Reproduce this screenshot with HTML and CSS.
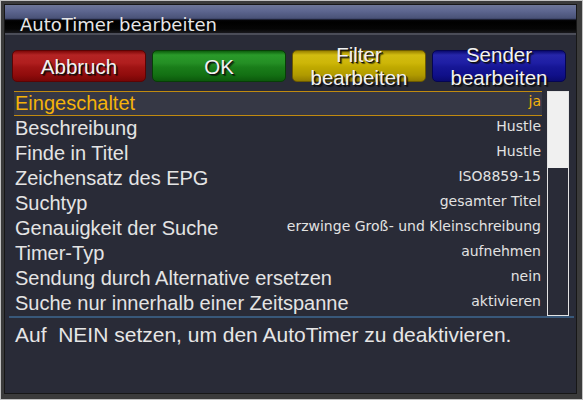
FILE: index.html
```html
<!DOCTYPE html>
<html>
<head>
<meta charset="utf-8">
<link rel="stylesheet" href="styles.css">
</head>
<body>
<div class="frame">
  <div class="window">
    <div class="title">AutoTimer bearbeiten</div>
    <div class="buttons">
      <div class="btn red">Abbruch</div>
      <div class="btn green">OK</div>
      <div class="btn yellow">Filter<br>bearbeiten</div>
      <div class="btn blue">Sender<br>bearbeiten</div>
    </div>
    <div class="listarea">
      <div class="list">
        <div class="row sel"><span class="label">Eingeschaltet</span><span class="value">ja</span></div>
        <div class="row"><span class="label">Beschreibung</span><span class="value">Hustle</span></div>
        <div class="row"><span class="label">Finde in Titel</span><span class="value">Hustle</span></div>
        <div class="row"><span class="label">Zeichensatz des EPG</span><span class="value">ISO8859-15</span></div>
        <div class="row"><span class="label">Suchtyp</span><span class="value">gesamter Titel</span></div>
        <div class="row"><span class="label">Genauigkeit der Suche</span><span class="value">erzwinge Groß- und Kleinschreibung</span></div>
        <div class="row"><span class="label">Timer-Typ</span><span class="value">aufnehmen</span></div>
        <div class="row"><span class="label">Sendung durch Alternative ersetzen</span><span class="value">nein</span></div>
        <div class="row"><span class="label">Suche nur innerhalb einer Zeitspanne</span><span class="value">aktivieren</span></div>
      </div>
      <div class="scrollbar"><div class="thumb"></div></div>
    </div>
    <div class="sep"></div>
    <div class="desc">Auf&nbsp; NEIN setzen, um den AutoTimer zu deaktivieren.</div>
  </div>
</div>
</body>
</html>
```
FILE: styles.css
```css
html, body {
  margin: 0;
  padding: 0;
  background: #bdbdbd;
}
.frame {
  width: 583px;
  height: 400px;
  box-sizing: border-box;
  border: 1px solid #c2c2c2;
  background: #3b3b3b;
  padding: 3px 5px 5px 3px;
}
.window {
  height: 100%;
  box-sizing: border-box;
  border: 1px solid #171717;
  background: #292b37;
  overflow: hidden;
}
.title {
  height: 30px;
  box-sizing: border-box;
  padding: 10px 0 0 15px;
  line-height: 20px;
  font-family: "DejaVu Sans", sans-serif;
  font-size: 18px;
  color: #e6e6e6;
  background: linear-gradient(to bottom, #6e7798 0px, #5d6690 6px, #4a5378 13px, #363d60 14px, #060609 15px, #000 17px, #050505 24px, #18181c 28px);
  border-bottom: 2px solid #4b4d58;
}
.buttons {
  display: flex;
  gap: 6px;
  margin-top: 15px;
  padding-left: 7px;
}
.btn {
  width: 134px;
  height: 32px;
  box-sizing: border-box;
  border-radius: 5px;
  display: flex;
  align-items: center;
  justify-content: center;
  text-align: center;
  font-family: "Liberation Sans", Arial, sans-serif;
  font-size: 20.5px;
  line-height: 23px;
  color: #f2f2f2;
  text-shadow: 1px 1px 0 #111, 2px 2px 1px rgba(0,0,0,0.6);
  white-space: nowrap;
}
.red {
  background: linear-gradient(to bottom, #7e0808 0px, #b42424 4px, #b01e1e 12px, #a01414 16px, #900c0c 24px, #6e0404 32px);
  border: 1px solid #5a0404;
}
.green {
  background: linear-gradient(to bottom, #0d5e0d 0px, #2a9a2a 4px, #248f24 12px, #1a7e1a 16px, #137013 24px, #0a520a 32px);
  border: 1px solid #073e07;
}
.yellow {
  background: linear-gradient(to bottom, #9a8200 0px, #d2bc10 4px, #cdb608 12px, #c0aa00 16px, #b09a00 24px, #8a7400 32px);
  border: 1px solid #6c5a00;
}
.blue {
  background: linear-gradient(to bottom, #0a0a70 0px, #2626aa 4px, #1e1ea4 12px, #161696 16px, #10108a 24px, #08086a 32px);
  border: 1px solid #050552;
}
.listarea {
  display: flex;
  gap: 5px;
  margin-top: 9px;
  margin-left: 9px;
}
.list {
  width: 528px;
}
.row {
  height: 25px;
  box-sizing: border-box;
  border-top: 1px solid transparent;
  border-bottom: 1px solid transparent;
  display: flex;
  justify-content: space-between;
  padding: 0 1px 0 1px;
}
.row.sel {
  border-color: #c08a10;
  background: #363845;
}
.label {
  font-family: "Liberation Sans", Arial, sans-serif;
  font-size: 20px;
  line-height: 23px;
  color: #e4e4e4;
  white-space: nowrap;
}
.value {
  align-self: flex-start;
  margin-top: 1px;
  font-family: "DejaVu Sans", sans-serif;
  font-size: 14px;
  line-height: 16px;
  color: #e2e2e2;
  white-space: nowrap;
}
.sel .label, .sel .value {
  color: #f4b20a;
}
.scrollbar {
  width: 22px;
  height: 225px;
  box-sizing: border-box;
  border: 1px solid #e4e4e4;
}
.thumb {
  height: 76px;
  background: #f0f0f0;
}
.sep {
  margin-left: 4px;
  width: 565px;
  height: 2px;
  background: #38587a;
}
.desc {
  margin: 4px 0 0 10px;
  font-family: "Liberation Sans", Arial, sans-serif;
  font-size: 21px;
  line-height: 25px;
  color: #e6e6e6;
  white-space: nowrap;
}
```
